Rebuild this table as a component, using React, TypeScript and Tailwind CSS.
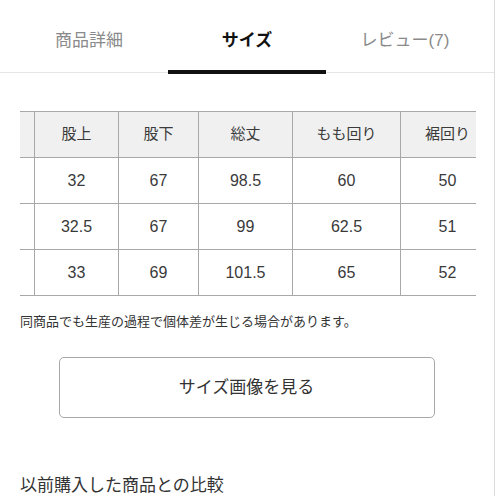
import React from "react";

const font = { fontFamily: '"Liberation Sans", "Noto Sans CJK JP", sans-serif' };

const headers = ["", "股上", "股下", "総丈", "もも回り", "裾回り"];
const rows = [
  ["", "32", "67", "98.5", "60", "50"],
  ["", "32.5", "67", "99", "62.5", "51"],
  ["", "33", "69", "101.5", "65", "52"],
];
const widths = [60, 84, 80, 94, 108, 94];

export default function App() {
  return (
    <div className="w-[496px] h-[496px] overflow-hidden bg-white" style={font}>
      <div className="w-[495px] min-h-[520px] border-r border-[#dcdcdc] flex flex-col">
        <div className="h-[73px] shrink-0 border-b border-[#e6e6e6] flex pl-[10px]">
          {[
            { t: "商品詳細", a: false },
            { t: "サイズ", a: true },
            { t: "レビュー(7)", a: false },
          ].map((tab) => (
            <div key={tab.t} className="w-[158px] flex flex-col">
              <div
                className={
                  "flex-1 flex items-center justify-center text-[17px] pt-[14px] " +
                  (tab.a ? "font-bold text-[#111]" : "text-[#8a8a8a]")
                }
              >
                {tab.t}
              </div>
              <div className={"h-[4px] relative top-[2px] " + (tab.a ? "bg-[#111]" : "")} />
            </div>
          ))}
        </div>

        <div className="mt-[38px] ml-[20px] w-[456px] shrink-0 overflow-hidden">
          <table className="w-[520px] table-fixed border-collapse ml-[-46px] text-[#3a3a3a]">
            <colgroup>
              {widths.map((w, i) => (
                <col key={i} style={{ width: w }} />
              ))}
            </colgroup>
            <thead>
              <tr className="h-[46px] bg-[#f0f0f0]">
                {headers.map((h, i) => (
                  <th
                    key={i}
                    className="border border-[#a8a8a8] font-normal text-[15px] text-center p-0"
                  >
                    {h}
                  </th>
                ))}
              </tr>
            </thead>
            <tbody>
              {rows.map((r, ri) => (
                <tr key={ri} className="h-[46px]">
                  {r.map((c, ci) => (
                    <td
                      key={ci}
                      className="border border-[#a8a8a8] text-[16px] text-center p-0"
                    >
                      {c}
                    </td>
                  ))}
                </tr>
              ))}
            </tbody>
          </table>
        </div>

        <p className="mt-[17px] ml-[20px] shrink-0 text-[13px] text-[#333] leading-[18px]">
          同商品でも生産の過程で個体差が生じる場合があります。
        </p>

        <div className="mt-[26px] shrink-0 flex justify-center pr-[1px]">
          <button className="w-[376px] h-[61px] border border-[#a8a8a8] rounded-[5px] text-[17px] text-[#333] bg-white">
            サイズ画像を見る
          </button>
        </div>

        <h2 className="mt-[56px] ml-[20px] shrink-0 text-[17px] text-[#333] leading-[24px]">
          以前購入した商品との比較
        </h2>
      </div>
    </div>
  );
}
